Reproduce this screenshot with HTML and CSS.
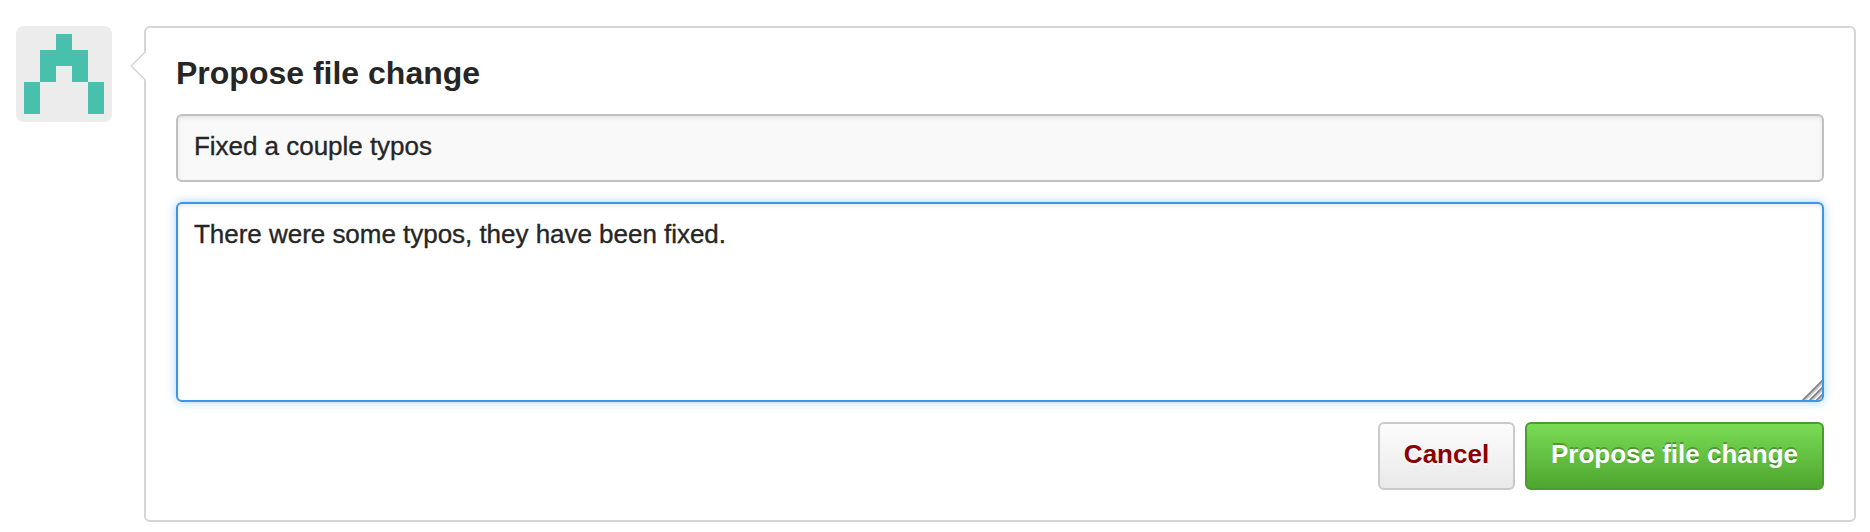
FILE: index.html
```html
<!DOCTYPE html>
<html lang="en">
<head>
<meta charset="utf-8">
<title>Propose file change</title>
<link rel="stylesheet" href="styles.css">
</head>
<body>
<div class="proposal">
  <svg class="avatar" viewBox="0 0 96 96" aria-hidden="true">
    <rect width="96" height="96" rx="8" fill="#ececec"/>
    <path d="M40 8h16v16h16v32h16v32H72V56H56V40H40v16H24v32H8V56h16V24h16z" fill="#47c0ac"/>
  </svg>
  <form class="card">
    <svg class="caret" viewBox="0 0 16 30" aria-hidden="true">
      <path d="M16 0L1.200 15L16 30z" fill="#fff"/>
      <path d="M15.500 .8L1.200 15L15.500 29.200" fill="none" stroke="#d5d5d5" stroke-width="1.500"/>
    </svg>
    <h1 class="title">Propose file change</h1>
    <input class="field summary" type="text" value="Fixed a couple typos">
    <div class="description-wrap">
      <textarea class="field description">There were some typos, they have been fixed.</textarea>
      <svg class="grip" viewBox="0 0 20 20" aria-hidden="true">
        <g fill="none" stroke="#c8c8c8" stroke-width="1.600">
          <path d="M2 21.500L21.500 2M9 21.500L21.500 9M16 21.500L21.500 16"/>
        </g>
        <g fill="none" stroke="#808080" stroke-width="1.800">
          <path d="M-1 22L22 -1M6 22L22 6M13 22L22 13"/>
        </g>
      </svg>
    </div>
    <div class="actions">
      <button class="button cancel" type="button">Cancel</button>
      <button class="button submit" type="button">Propose file change</button>
    </div>
  </form>
</div>
</body>
</html>
```
FILE: styles.css
```css
* { box-sizing: border-box; }
body {
  margin: 0;
  background: #fff;
  color: #262626;
  font-family: "Liberation Sans", Arial, sans-serif;
}
.proposal {
  display: flex;
  align-items: flex-start;
  gap: 32px;
  padding: 26px 14px 10px 16px;
}
.avatar { display: block; width: 96px; height: 96px; flex: none; }
.card {
  position: relative;
  display: flex;
  flex-direction: column;
  flex: 1;
  height: 496px;
  padding: 28px 30px 30px;
  border: 2px solid #d5d5d5;
  border-radius: 6px;
  background: #fff;
}
.caret { position: absolute; left: -16px; top: 23px; width: 16px; height: 30px; }
.title {
  margin: 0 0 18px;
  height: 40px;
  font-size: 32px;
  line-height: 35px;
  font-weight: bold;
}
.field {
  display: block;
  width: 100%;
  border: 2px solid #c0c0c0;
  border-radius: 6px;
  outline: none;
  color: #262626;
  font: 26px/30px "Liberation Sans", Arial, sans-serif;
  letter-spacing: -.03px;
  -webkit-text-stroke: .35px #262626;
  box-shadow: inset 0 2px 4px rgba(0, 0, 0, .09);
}
.summary { height: 68px; padding: 14px 16px 18px; background: #f9f9f9; }
.description-wrap { position: relative; margin-top: 20px; }
.description {
  height: 200px;
  padding: 15px 16px;
  resize: none;
  overflow: hidden;
  background: #fff;
  border-color: #3d94e9;
  box-shadow: inset 0 2px 4px rgba(0, 0, 0, .09), 0 0 10px rgba(81, 167, 232, .5);
}
.grip { position: absolute; right: 2px; bottom: 2px; width: 20px; height: 20px; border-bottom-right-radius: 4px; }
.actions { display: flex; justify-content: flex-end; gap: 10px; margin-top: 20px; }
.button {
  height: 68px;
  padding: 0 0 4px;
  border: 2px solid;
  border-radius: 6px;
  font: bold 26px/30px "Liberation Sans", Arial, sans-serif;
  white-space: nowrap;
}
.cancel {
  width: 137px;
  color: #8b0000;
  border-color: #cacaca;
  background: linear-gradient(#fcfcfc, #e9e9e9);
  text-shadow: 0 2px 0 rgba(255, 255, 255, .9);
}
.submit {
  width: 299px;
  color: #fff;
  border-color: #4a9c2e;
  background: linear-gradient(#79dc55, #4ea52f);
  text-shadow: 0 -2px 0 rgba(0, 0, 0, .25);
}
```
